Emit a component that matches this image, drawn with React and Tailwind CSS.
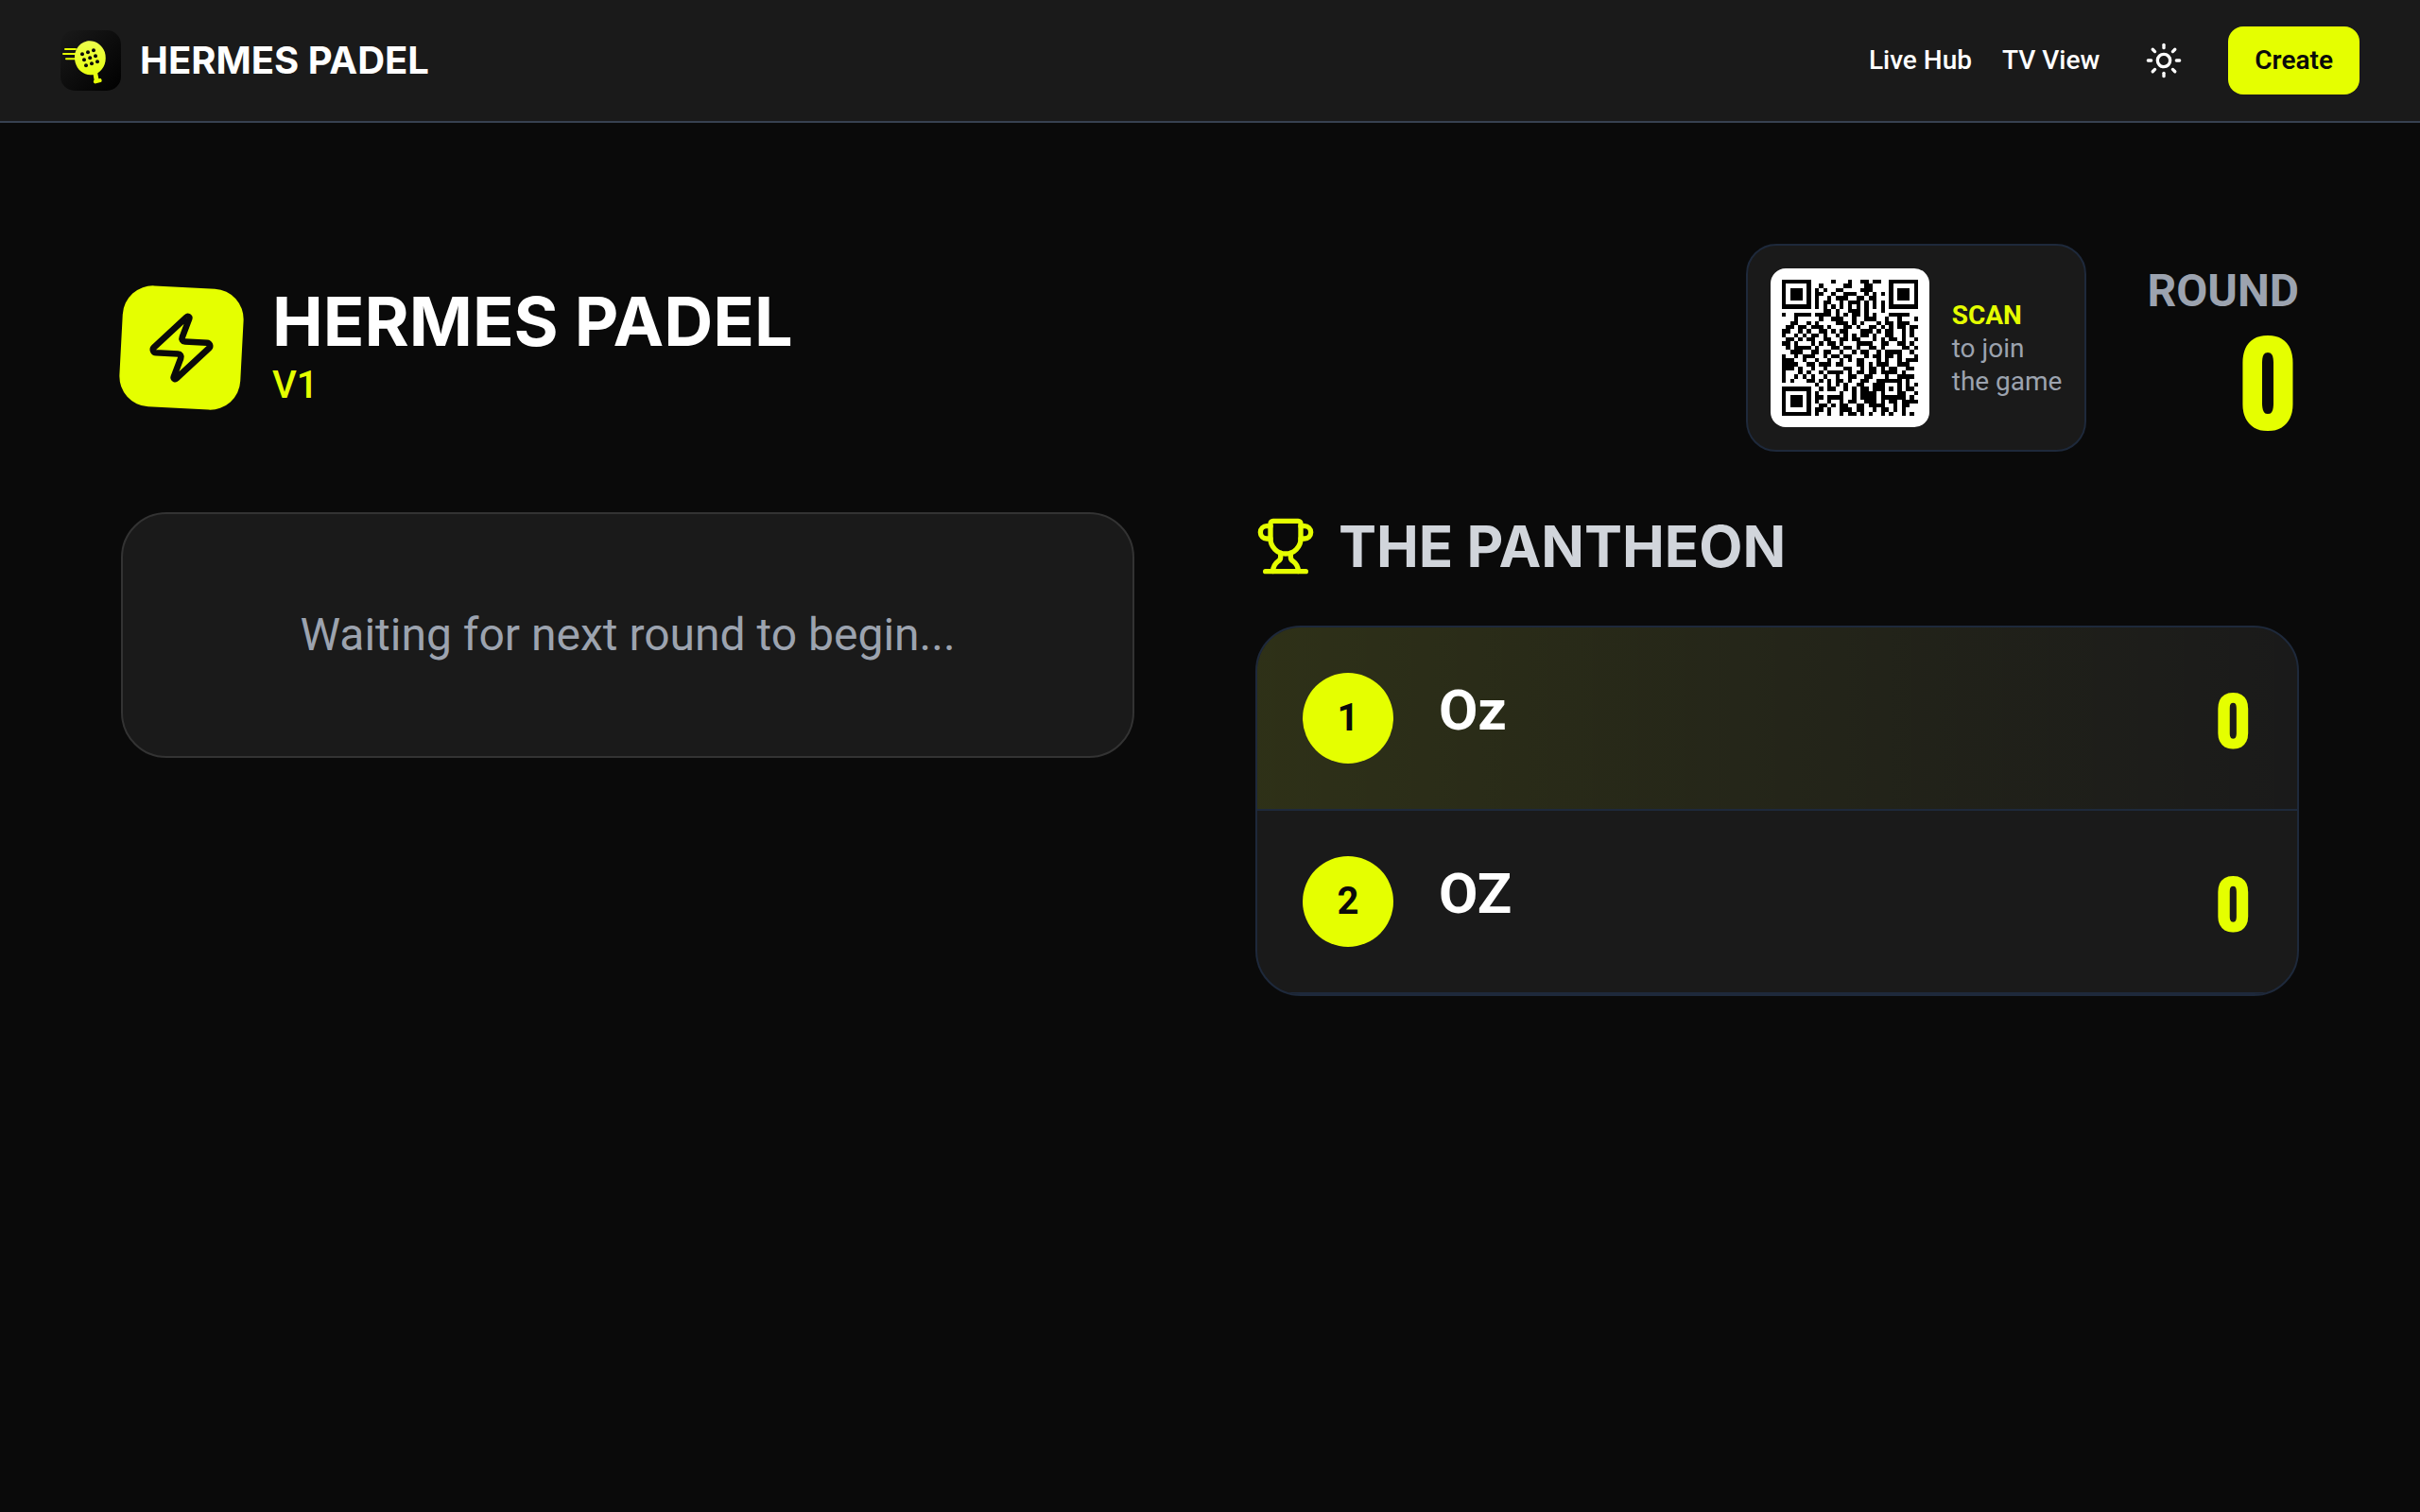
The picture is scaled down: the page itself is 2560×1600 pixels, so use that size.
import { Sun, Trophy, Zap } from "lucide-react";

const QR_ROWS = [
  "#######.....#...#..##.##..#######",
  "#.....#..#.....##...##....#.....#",
  "#.###.#.#.#..##....###....#.###.#",
  "#.###.#.##..#..###..#.#.#.#.###.#",
  "#.###.#.#..#.###..##.##...#.###.#",
  "#.....#.#.##..#.###.#.#.#.#.....#",
  "#######.#.#.#.#.#.#.#.#.#.#######",
  "..........##.#..###.#...#........",
  "#..####.####.#.#.##.#.#...#####..",
  "...#.....#..###..#..###..#..#...#",
  "..##..#.#....###.#.#...#.##.###..",
  ".##.##.###.#...##.#..##.#.#.##.##",
  "##..#.#..##.#.##...###.#.##..#.#.",
  "#..#.#.##.#..#.#.#.##.#..##..#.#.",
  ".##.#.##..##..##.##...#.#.##.#..#",
  "##.#...#.#.##.#...####..##..##.#.",
  ".#.####.#...##.##.#..##.#....##.#",
  "..###..##.##..#..#.##..#.####..#.",
  "#..#.###..#.##.##...#.##.##.#...#",
  "###..#..#..#..#.#.##...#.#..#.###",
  "####..##.###.##...##.#.###..###..",
  "###.#..#..#....##..#.##.#.##..##.",
  "#...#.#..#.####.#.##.##.####.#...",
  "#..#.#.#..#..#..##..##...#..####.",
  "#.#...##.#.#.##.#..##..##.###.#..",
  "........#..#.#.#..##..##.#..#.#.#",
  "#######..#.##..#.#.##.##.##.#.##.",
  "#.....#.#.....#..#.####.#...##..#",
  "#.###.#.##.####..#.####.######.#.",
  "#.###.#.#..#..#.##..###.#.##.####",
  "#.###.#..##.#.##..##.####..#.##..",
  "#.....#.##.#..###.##..#.##.#.#...",
  "#######.#..#..#.##.#.#..#.#..#.#.",
];

// The 5x5 alignment pattern sits at the lower right of the code.
const ALIGNMENT = ["#####", "#...#", "#.#.#", "#...#", "#####"];

function isDark(x, y) {
  const ax = x - 24;
  const ay = y - 24;
  if (ax >= 0 && ax < 5 && ay >= 0 && ay < 5) return ALIGNMENT[ay][ax] === "#";
  return QR_ROWS[y][x] === "#";
}

function QrCode() {
  let d = "";
  QR_ROWS.forEach((row, y) => {
    for (let x = 0; x < row.length; x++) {
      if (isDark(x, y)) d += `M${x} ${y}h1v1h-1z`;
    }
  });
  return (
    <svg viewBox="0 0 33 33" className="size-36" shapeRendering="crispEdges" role="img" aria-label="QR code to join the game">
      <path d={d} fill="#000" />
    </svg>
  );
}

const DOTS = [
  [23, 25.3], [29, 23.2], [35, 21.2],
  [25, 31.3], [31.2, 29.3], [37, 27.3],
  [27, 37.3], [33, 35.3], [39, 33.3],
];

function Logo() {
  return (
    <svg viewBox="0 0 64 64" className="size-16" aria-hidden="true">
      <defs>
        <linearGradient id="tile" x1="0" y1="0" x2="1" y2="1">
          <stop offset="0" stopColor="#1a1a1a" />
          <stop offset="1" stopColor="#000" />
        </linearGradient>
        <linearGradient id="racket" x1="0" y1="0" x2="0" y2="1">
          <stop offset="0" stopColor="#edff4d" />
          <stop offset="1" stopColor="#e5ff00" />
        </linearGradient>
      </defs>
      <rect width="64" height="64" rx="15" fill="url(#tile)" />
      <g stroke="#e5ff00" strokeWidth="2" strokeLinecap="round">
        <path d="M5 20H16M3 25H16M6 30.3H16" />
      </g>
      <path
        d="M28 11.4C36 10 44 15 46.800 23C49.500 32 46.500 41 39.200 45.500L40.400 51.300L42.600 51C43.800 52.200 44 53.600 43.200 54.800L36.600 56.600C34.600 56 34.400 54.200 35.600 52.600L34.600 46.900C26 48.500 18 43 15.600 34C13 24 18 13.500 28 11.400Z"
        fill="url(#racket)"
      />
      {DOTS.map(([x, y]) => (
        <circle key={`${x}-${y}`} cx={x} cy={y} r="2" fill="#0a0a0a" />
      ))}
    </svg>
  );
}

const PLAYERS = [
  { rank: 1, name: "Oz", score: 0, row: "bg-linear-to-r from-[#e5ff00]/10 to-transparent" },
  { rank: 2, name: "OZ", score: 0, row: "" },
];

export default function App() {
  return (
    <div className="min-h-screen bg-[#0a0a0a] font-[Roboto,sans-serif] text-white">
      <header className="flex items-center justify-between border-b-2 border-[#374151] bg-[#1a1a1a] px-16 py-7">
        <a href="#" className="flex items-center gap-5">
          <Logo />
          <span className="font-[Inter,sans-serif] text-[40px] leading-[56px] font-bold">HERMES PADEL</span>
        </a>
        <nav className="flex items-center gap-8 text-[28px] leading-[40px]">
          <a href="#" className="font-medium">Live Hub</a>
          <a href="#" className="font-medium">TV View</a>
          <button type="button" aria-label="Toggle theme" className="flex size-[72px] items-center justify-center">
            <Sun className="size-10" />
          </button>
          <button type="button" className="rounded-2xl bg-[#e5ff00] px-7 py-4 font-semibold text-[#0a0a0a]">Create</button>
        </nav>
      </header>

      <main className="p-32">
        <div className="mb-16 flex items-center justify-between">
          <div className="flex items-center gap-8">
            <div className="flex size-32 rotate-3 items-center justify-center rounded-[32px] bg-[#e5ff00] text-[#0a0a0a]">
              <Zap className="size-20" />
            </div>
            <div>
              <h1 className="font-[Inter,sans-serif] text-[72px] leading-[80px] font-bold">HERMES PADEL</h1>
              <p className="text-[40px] leading-[56px] font-medium text-[#e5ff00]">V1</p>
            </div>
          </div>
          <div className="flex items-center gap-16">
            <div className="flex items-center gap-6 rounded-[32px] border-2 border-[#1e293b] bg-[#1a1a1a] p-6">
              <div className="rounded-2xl bg-white p-3">
                <QrCode />
              </div>
              <p className="text-[28px] leading-[35px] text-[#9ca3af]">
                <span className="block font-bold text-[#e5ff00]">SCAN</span>
                <span className="block">to join</span>
                <span className="block">the game</span>
              </p>
            </div>
            <div className="text-right">
              <p className="text-[48px] leading-[64px] font-bold text-[#9ca3af]">ROUND</p>
              <p className="font-[Oswald,sans-serif] text-[120px] leading-[120px] font-bold text-[#e5ff00]">0</p>
            </div>
          </div>
        </div>

        <div className="grid grid-cols-[67fr_69fr] items-start gap-32">
          <section className="rounded-[48px] border-2 border-[#333] bg-[#1a1a1a] px-24 py-24 text-center">
            <p className="text-[48px] leading-[64px] text-[#9ca3af]">Waiting for next round to begin...</p>
          </section>

          <section>
            <h2 className="mb-12 flex items-center gap-6 font-[Inter,sans-serif] text-[60px] leading-[72px] font-bold text-[#d1d5db]">
              <Trophy className="size-16 text-[#e5ff00]" />
              THE PANTHEON
            </h2>
            <ol className="overflow-hidden rounded-[48px] border-2 border-[#1e293b] bg-[#1a1a1a]">
              {PLAYERS.map((p) => (
                <li key={p.rank} className={`flex items-center gap-12 border-b-2 border-[#1e293b] p-12 ${p.row}`}>
                  <span className="flex size-24 items-center justify-center rounded-full bg-[#e5ff00] text-[40px] leading-[56px] font-bold text-[#0a0a0a]">
                    {p.rank}
                  </span>
                  <span className="flex-1 pb-4 text-[60px] leading-[72px] font-bold">{p.name}</span>
                  <span className="font-[Oswald,sans-serif] text-[72px] leading-[80px] font-bold text-[#e5ff00]">{p.score}</span>
                </li>
              ))}
            </ol>
          </section>
        </div>
      </main>
    </div>
  );
}
